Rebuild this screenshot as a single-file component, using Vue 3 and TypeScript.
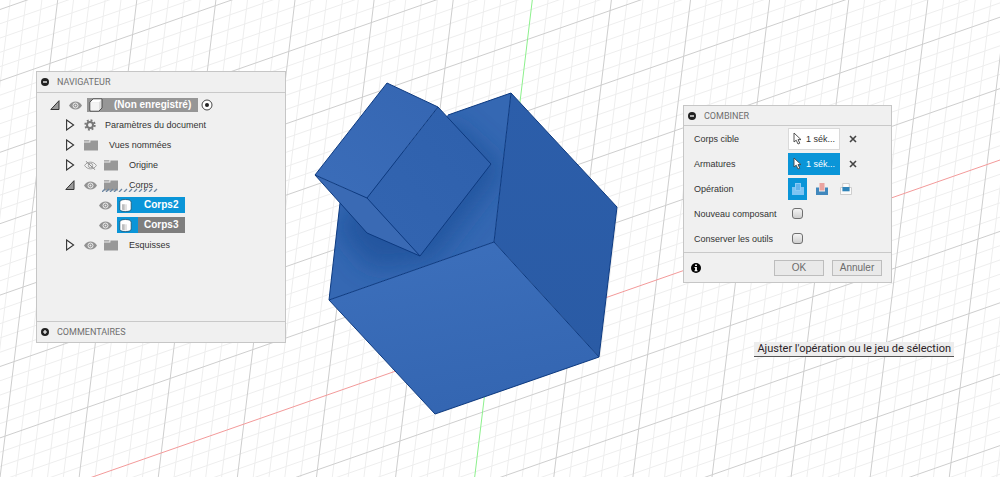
<script setup lang="ts">
import { ref } from 'vue'

interface GridLine {
  x1: number
  y1: number
  x2: number
  y2: number
  kind: 'major' | 'minor' | 'axis-x' | 'axis-y'
}

interface TreeNode {
  label: string
  level: number
  toggle?: 'open' | 'closed'
  eye?: 'on' | 'off'
  icon: 'document' | 'gear' | 'folder' | 'body'
  chip?: 'grey' | 'blue' | 'mixed'
  active?: boolean
  hatched?: boolean
}

const SUBDIVISIONS = 5

function kindOf(index: number, axis: 'axis-x' | 'axis-y'): GridLine['kind'] {
  if (index === 0) return axis
  return index % SUBDIVISIONS === 0 ? 'major' : 'minor'
}

const lines: GridLine[] = []
for (let i = -35; i <= 35; i++) {
  const shift = (i * 79.1) / SUBDIVISIONS
  lines.push({ x1: 532.3 + shift, y1: 0, x2: 474.7 + shift, y2: 477, kind: kindOf(i, 'axis-y') })
}
for (let i = -36; i <= 22; i++) {
  const shift = (i * 71.4) / SUBDIVISIONS
  lines.push({ x1: 0, y1: 509.3 + shift, x2: 1000, y2: 160 + shift, kind: kindOf(i, 'axis-x') })
}
const rank = { minor: 0, major: 1, 'axis-x': 2, 'axis-y': 2 }
lines.sort((a, b) => rank[a.kind] - rank[b.kind])

const nodes: TreeNode[] = [
  { label: '(Non enregistré)', level: 0, toggle: 'open', eye: 'on', icon: 'document', chip: 'grey', active: true },
  { label: 'Paramètres du document', level: 1, toggle: 'closed', icon: 'gear' },
  { label: 'Vues nommées', level: 1, toggle: 'closed', icon: 'folder' },
  { label: 'Origine', level: 1, toggle: 'closed', eye: 'off', icon: 'folder' },
  { label: 'Corps', level: 1, toggle: 'open', eye: 'on', icon: 'folder', hatched: true },
  { label: 'Corps2', level: 2, eye: 'on', icon: 'body', chip: 'blue' },
  { label: 'Corps3', level: 2, eye: 'on', icon: 'body', chip: 'mixed' },
  { label: 'Esquisses', level: 1, toggle: 'closed', eye: 'on', icon: 'folder' },
]

const selectors = [
  { id: 'target', label: 'Corps cible', active: false },
  { id: 'tools', label: 'Armatures', active: true },
]
const operations = ['Joindre', 'Couper', 'Intersection']
const operation = ref(0)
const newComponent = ref(false)
const keepTools = ref(false)
</script>

<template>
  <main class="stage">
    <svg class="scene" viewBox="0 0 1000 477" preserveAspectRatio="xMidYMid slice" aria-hidden="true">
      <defs>
        <linearGradient id="front" x1="0" y1="0" x2="0.3" y2="1">
          <stop offset="0" stop-color="#3d70bc" />
          <stop offset="1" stop-color="#3466b2" />
        </linearGradient>
        <linearGradient id="side" x1="0" y1="0" x2="0" y2="1">
          <stop offset="0" stop-color="#2c5eaa" />
          <stop offset="1" stop-color="#2a5ba5" />
        </linearGradient>
        <linearGradient id="small-top" x1="1" y1="0" x2="0" y2="1">
          <stop offset="0" stop-color="#3566b2" />
          <stop offset="1" stop-color="#3b6db9" />
        </linearGradient>
        <linearGradient id="small-side" x1="1" y1="0" x2="0" y2="1">
          <stop offset="0" stop-color="#2e60ac" />
          <stop offset="1" stop-color="#3365b1" />
        </linearGradient>
        <clipPath id="top-clip">
          <path d="M511 93 494 242 329 300 340 203 448 115z" />
        </clipPath>
        <filter id="soft" x="-30%" y="-30%" width="160%" height="160%">
          <feGaussianBlur stdDeviation="13" />
        </filter>
      </defs>
      <line
        v-for="(l, i) in lines"
        :key="i"
        :x1="l.x1"
        :y1="l.y1"
        :x2="l.x2"
        :y2="l.y2"
        :class="l.kind"
      />
      <path d="M511 93 494 242 329 300 340 203 448 115z" fill="#3568b3" />
      <g clip-path="url(#top-clip)">
        <path d="M450 120 504 168 432 262 370 268 335 225z" fill="#1f4f98" opacity="0.75" filter="url(#soft)" />
      </g>
      <path d="M511 93 617 207 599 357 494 242z" fill="url(#side)" />
      <path d="M494 242 599 357 435 414 329 300z" fill="url(#front)" />
      <g class="edges">
        <path d="M448 115 511 93 617 207 599 357 435 414 329 300 340 203" />
        <path d="M511 93 494 242 329 300M494 242 599 357" />
      </g>
      <path d="M387 83 438 107 367 198 315 175z" fill="url(#small-top)" />
      <path d="M438 107 491 164 420 256 367 198z" fill="url(#small-side)" />
      <path d="M315 175 367 198 420 256 367 233z" fill="#3a6ab4" />
      <g class="edges">
        <path d="M387 83 438 107 491 164 420 256 367 233 315 175z" />
        <path d="M315 175 367 198 438 107M367 198 420 256" />
      </g>
    </svg>

    <section class="panel navigator" aria-label="Navigateur">
      <header class="bar">
        <button class="round" type="button" aria-label="Réduire">
          <svg viewBox="0 0 8 8"><circle cx="4" cy="4" r="4" fill="#222" /><path d="M2 4h4" stroke="#fff" stroke-width="1.3" /></svg>
        </button>
        <h2>NAVIGATEUR</h2>
      </header>
      <ul class="tree">
        <li v-for="n in nodes" :key="n.label" class="node" :class="'level-' + n.level">
          <button v-if="n.toggle" class="toggle" type="button" :aria-label="'Développer ' + n.label">
            <svg v-if="n.toggle === 'open'" viewBox="0 0 10 12">
              <path d="M9 1.7V10.5H.8z" fill="#999" stroke="#333" />
            </svg>
            <svg v-else viewBox="0 0 10 12">
              <path d="M1.6 1 8.6 6 1.6 11z" fill="#f8f8f8" stroke="#333" stroke-width="1.1" />
            </svg>
          </button>
          <button v-if="n.eye" class="eye" type="button" :aria-label="'Visibilité ' + n.label">
            <svg v-if="n.eye === 'on'" viewBox="0 0 13 9">
              <path d="M0 4.5C3-.8 10-.8 13 4.5 10 9.8 3 9.8 0 4.5z" fill="#929292" />
              <circle cx="6.5" cy="4.5" r="2.5" fill="none" stroke="#efefef" />
              <circle cx="6.5" cy="4.5" r="1" fill="#e8e8e8" />
            </svg>
            <svg v-else viewBox="0 0 13 9">
              <path d="M.6 4.5C3.4 0 9.6 0 12.4 4.5 9.6 9 3.4 9 .6 4.5z" fill="none" stroke="#999" stroke-width="0.9" />
              <circle cx="6.5" cy="4.5" r="2.2" fill="none" stroke="#999" stroke-width="0.9" />
              <path d="M1.8.2 11.2 8.8" stroke="#888" />
            </svg>
          </button>
          <template v-if="n.chip">
            <span class="chip" :class="n.chip">
              <span class="chip-icon">
                <svg v-if="n.icon === 'document'" class="document" viewBox="0 0 14 14">
                  <path d="M1 4 4 1H13V10L10 13H1z" fill="#ddd" stroke="#333" stroke-width="0.8" stroke-linejoin="round" />
                  <path d="M1.5 4.2 4.2 1.5H12.5L10 4.2z" fill="#fff" />
                  <path d="M1.5 4.2H10V12.5H1.5z" fill="#f4f4f4" />
                </svg>
                <svg v-else class="solid" viewBox="0 0 13 13">
                  <path d="M.8 3.4C.8 1.6 2.6.5 6.5.5S12.2 1.6 12.2 3.4V10C12.2 11.6 10.4 12.5 6.5 12.5S.8 11.6.8 10z" fill="#fff" stroke="#19506e" stroke-width="0.8" />
                  <path d="M3 5.3H5.8V11.3L3 10.8z" fill="#bdbdbd" />
                  <path d="M5.8 5.3H8V11.3H5.8z" fill="#e2e2e2" />
                </svg>
              </span>
              <span class="chip-label">{{ n.label }}</span>
            </span>
            <svg v-if="n.active" class="target" viewBox="0 0 12 12">
              <circle cx="6" cy="6" r="5" fill="#fff" stroke="#333" stroke-width="0.9" />
              <circle cx="6" cy="6" r="2" fill="#222" />
            </svg>
          </template>
          <template v-else>
            <svg v-if="n.icon === 'gear'" class="gear" viewBox="0 0 12 12">
              <circle cx="6" cy="6" r="4.7" fill="none" stroke="#777" stroke-width="2" stroke-dasharray="1.85 1.84" />
              <circle cx="6" cy="6" r="3" fill="none" stroke="#777" stroke-width="2" />
            </svg>
            <svg v-else class="folder" :class="{ shifted: n.eye }" viewBox="0 0 14 12">
              <path d="M0 1.2H5.4V2.6H0zM0 3.4H6.4V1.6H14V11.4H0z" fill="#989898" />
            </svg>
            <span class="name">{{ n.label }}</span>
            <svg v-if="n.hatched" class="hatch" viewBox="0 0 60 4">
              <path
                d="M0 4 3 1M4 4 7 1M8 4 11 1M12 4 15 1M17 4 20 1M22 4 25 1M27 4 30 1M32 4 35 1M37 4 40 1M42 4 45 1M47 4 50 1M52 4 55 1"
                stroke="#6b86a3"
                stroke-width="1.3"
              />
            </svg>
          </template>
        </li>
      </ul>
      <footer class="bar comments">
        <button class="round" type="button" aria-label="Ajouter">
          <svg viewBox="0 0 8 8"><circle cx="4" cy="4" r="4" fill="#222" /><path d="M2 4h4M4 2v4" stroke="#fff" stroke-width="1.2" /></svg>
        </button>
        <h2>COMMENTAIRES</h2>
      </footer>
    </section>

    <form class="panel combine" aria-label="Combiner" @submit.prevent>
      <header class="bar">
        <button class="round" type="button" aria-label="Réduire">
          <svg viewBox="0 0 8 8"><circle cx="4" cy="4" r="4" fill="#222" /><path d="M2 4h4" stroke="#fff" stroke-width="1.3" /></svg>
        </button>
        <h2>COMBINER</h2>
      </header>
      <div class="fields">
        <div v-for="s in selectors" :key="s.id" class="field">
          <label :for="s.id">{{ s.label }}</label>
          <button :id="s.id" class="picker" :class="{ active: s.active }" type="button">
            <svg class="cursor" viewBox="0 0 9 13">
              <path d="M1 1V10L3.2 8.2 5 12 6.8 11.2 5 7.6H8z" fill="#fff" stroke="#444" stroke-width="0.9" stroke-linejoin="round" />
            </svg>
            <span>1 sék...</span>
          </button>
          <button class="clear" type="button" :aria-label="'Effacer ' + s.label">
            <svg viewBox="0 0 8 8"><path d="M1 1 7 7M7 1 1 7" stroke="#444" stroke-width="1.6" /></svg>
          </button>
        </div>
        <div class="field">
          <span class="label">Opération</span>
          <div class="operations" role="group" aria-label="Opération">
            <button
              v-for="(o, i) in operations"
              :key="o"
              class="operation"
              :class="{ active: operation === i }"
              type="button"
              :aria-label="o"
              :aria-pressed="operation === i"
              @click="operation = i"
            >
              <svg v-if="i === 0" viewBox="0 0 12 12">
                <path d="M3 0H9V4H12V12H0V4H3z" fill="#7cc4f3" />
                <path d="M3.5.5H8.5V7.5H3.5z" fill="#62b4ec" stroke="#9bd5fa" stroke-width="0.6" />
              </svg>
              <svg v-else-if="i === 1" viewBox="0 0 12 12">
                <path d="M0 4.5H3V8.5H9V4.5H12V12H0z" fill="#4188bd" />
                <path d="M3.5 0H8.5V7.5H3.5z" fill="#eaa3a0" />
              </svg>
              <svg v-else viewBox="0 0 12 12">
                <path d="M2.7.5H9.3V4.5H11.5V11.5H.5V4.5H2.7z" fill="#fbfbfb" stroke="#c4c4c4" stroke-width="0.8" />
                <path d="M2.4 4H9.6V8.3H2.4z" fill="#2f84b9" />
              </svg>
            </button>
          </div>
        </div>
        <div class="field">
          <label for="new-component">Nouveau composant</label>
          <input id="new-component" v-model="newComponent" type="checkbox" />
        </div>
        <div class="field">
          <label for="keep-tools">Conserver les outils</label>
          <input id="keep-tools" v-model="keepTools" type="checkbox" />
        </div>
      </div>
      <footer class="actions">
        <button class="info" type="button" aria-label="Informations">
          <svg viewBox="0 0 10 10">
            <circle cx="5" cy="5" r="5" fill="#000" />
            <path d="M4.1 1.6H5.9V3.1H4.1zM3.5 3.9H5.9V7.2H6.5V8.2H3.5V7.2H4.1V4.9H3.5z" fill="#fff" />
          </svg>
        </button>
        <button class="action" type="submit">OK</button>
        <button class="action" type="button">Annuler</button>
      </footer>
    </form>

    <p class="tooltip" role="tooltip">Ajuster l'opération ou le jeu de sélection</p>
  </main>
</template>

<style>
body {
  margin: 0;
}
</style>

<style scoped>
.stage {
  position: relative;
  min-height: 100vh;
  overflow: hidden;
  background: #fff;
  color: #333;
  font: 9px/12px 'Liberation Sans', Arial, sans-serif;
}
.scene {
  position: absolute;
  inset: 0;
  width: 100%;
  height: 100%;
}
.minor {
  stroke: #eeeeee;
}
.major {
  stroke: #cecece;
}
.axis-x {
  stroke: #f39a9a;
}
.axis-y {
  stroke: #8df08d;
}
.edges {
  fill: none;
  stroke: #0d3a80;
  stroke-linejoin: round;
}
button {
  display: flex;
  align-items: center;
  justify-content: center;
  padding: 0;
  border: 0;
  background: none;
  color: inherit;
  font: inherit;
}
svg {
  display: block;
}
.panel {
  position: absolute;
  box-sizing: border-box;
  border: 1px solid #c6c6c6;
  background: #f0f0f0;
}
.navigator {
  top: 71px;
  left: 36px;
  width: 250px;
}
.combine {
  top: 105px;
  right: 108px;
  width: 209px;
}
.bar {
  display: flex;
  align-items: center;
  gap: 8px;
  height: 20px;
  padding-left: 4px;
  border-bottom: 1px solid #c9c9c9;
}
.combine .bar {
  height: 19px;
}
.comments {
  border-top: 1px solid #c9c9c9;
  border-bottom: 0;
}
.bar h2 {
  margin: 0;
  color: #6e6e6e;
  font: 9px/12px Roboto, 'Liberation Sans', sans-serif;
}
.round,
.round svg {
  width: 8px;
  height: 8px;
}
.tree {
  min-height: 228px;
  margin: 0;
  padding: 2px 0 0;
  box-sizing: border-box;
  list-style: none;
}
.node {
  position: relative;
  display: flex;
  align-items: center;
  height: 20px;
}
.level-0 {
  padding-left: 13px;
}
.level-1 {
  padding-left: 28px;
}
.level-2 {
  padding-left: 62px;
}
.toggle {
  width: 10px;
  margin-right: 9px;
}
.toggle svg {
  width: 10px;
  height: 12px;
}
.eye {
  margin-right: 5px;
}
.eye svg {
  width: 13px;
  height: 9px;
}
.gear {
  width: 12px;
  height: 12px;
  margin-right: 9px;
}
.folder {
  width: 14px;
  height: 12px;
  margin-right: 11px;
}
.folder.shifted {
  margin-left: 2px;
}
.hatch {
  position: absolute;
  left: 65px;
  top: 13px;
  width: 60px;
  height: 4px;
}
.chip {
  display: flex;
  align-items: center;
  height: 16px;
  color: #fff;
  font-weight: bold;
  font-size: 10px;
}
.chip.grey {
  height: 14px;
  background: #969696;
}
.chip.blue {
  background: #0a95d8;
}
.chip.mixed {
  background: #7e7e7e;
}
.chip-icon {
  display: flex;
  align-items: center;
  align-self: stretch;
  width: 21px;
  box-sizing: border-box;
  padding-left: 2px;
}
.mixed .chip-icon {
  background: #0a95d8;
}
.chip-label {
  padding: 0 7px 0 6px;
}
.document {
  width: 14px;
  height: 14px;
}
.solid {
  width: 13px;
  height: 13px;
}
.target {
  width: 12px;
  height: 12px;
  margin-left: 3px;
}
.fields {
  padding: 0 10px 1px;
}
.field {
  display: flex;
  align-items: center;
  height: 25px;
}
.field label,
.field .label {
  flex: 0 0 94px;
}
.picker {
  gap: 4px;
  width: 52px;
  height: 22px;
  border: 1px solid #dadada;
  background: #fff;
}
.picker.active {
  border-color: #0a95d8;
  background: #0a95d8;
  color: #fff;
}
.cursor {
  width: 9px;
  height: 13px;
}
.clear {
  margin-left: 9px;
}
.clear svg {
  width: 8px;
  height: 8px;
}
.operations {
  display: flex;
  gap: 5px;
}
.operation {
  width: 19px;
  height: 22px;
}
.operation.active {
  background: #0a95d8;
}
.operation svg {
  width: 12px;
  height: 12px;
}
input[type='checkbox'] {
  appearance: none;
  box-sizing: border-box;
  width: 11px;
  height: 11px;
  margin: 0 4px;
  border: 1px solid #6f6f6f;
  border-radius: 3px;
  background: linear-gradient(#f4f4f4, #cfcfcf);
}
input[type='checkbox']:checked {
  background: #0a95d8;
}
.actions {
  display: flex;
  align-items: center;
  gap: 8px;
  height: 29px;
  padding: 0 9px 0 7px;
  border-top: 1px solid #c9c9c9;
}
.info {
  margin-right: auto;
}
.info svg {
  width: 10px;
  height: 10px;
}
.action {
  box-sizing: border-box;
  width: 50px;
  height: 16px;
  border: 1px solid #bdbdbd;
  background: #e9e9e9;
  color: #6b6b6b;
  font-size: 10px;
}
.tooltip {
  position: absolute;
  top: 342px;
  right: 46px;
  margin: 0;
  padding: 0 3px;
  border-bottom: 1px solid #555;
  background: #ededed;
  color: #2b2226;
  font: 11px/14px Roboto, 'Open Sans', sans-serif;
}
</style>
